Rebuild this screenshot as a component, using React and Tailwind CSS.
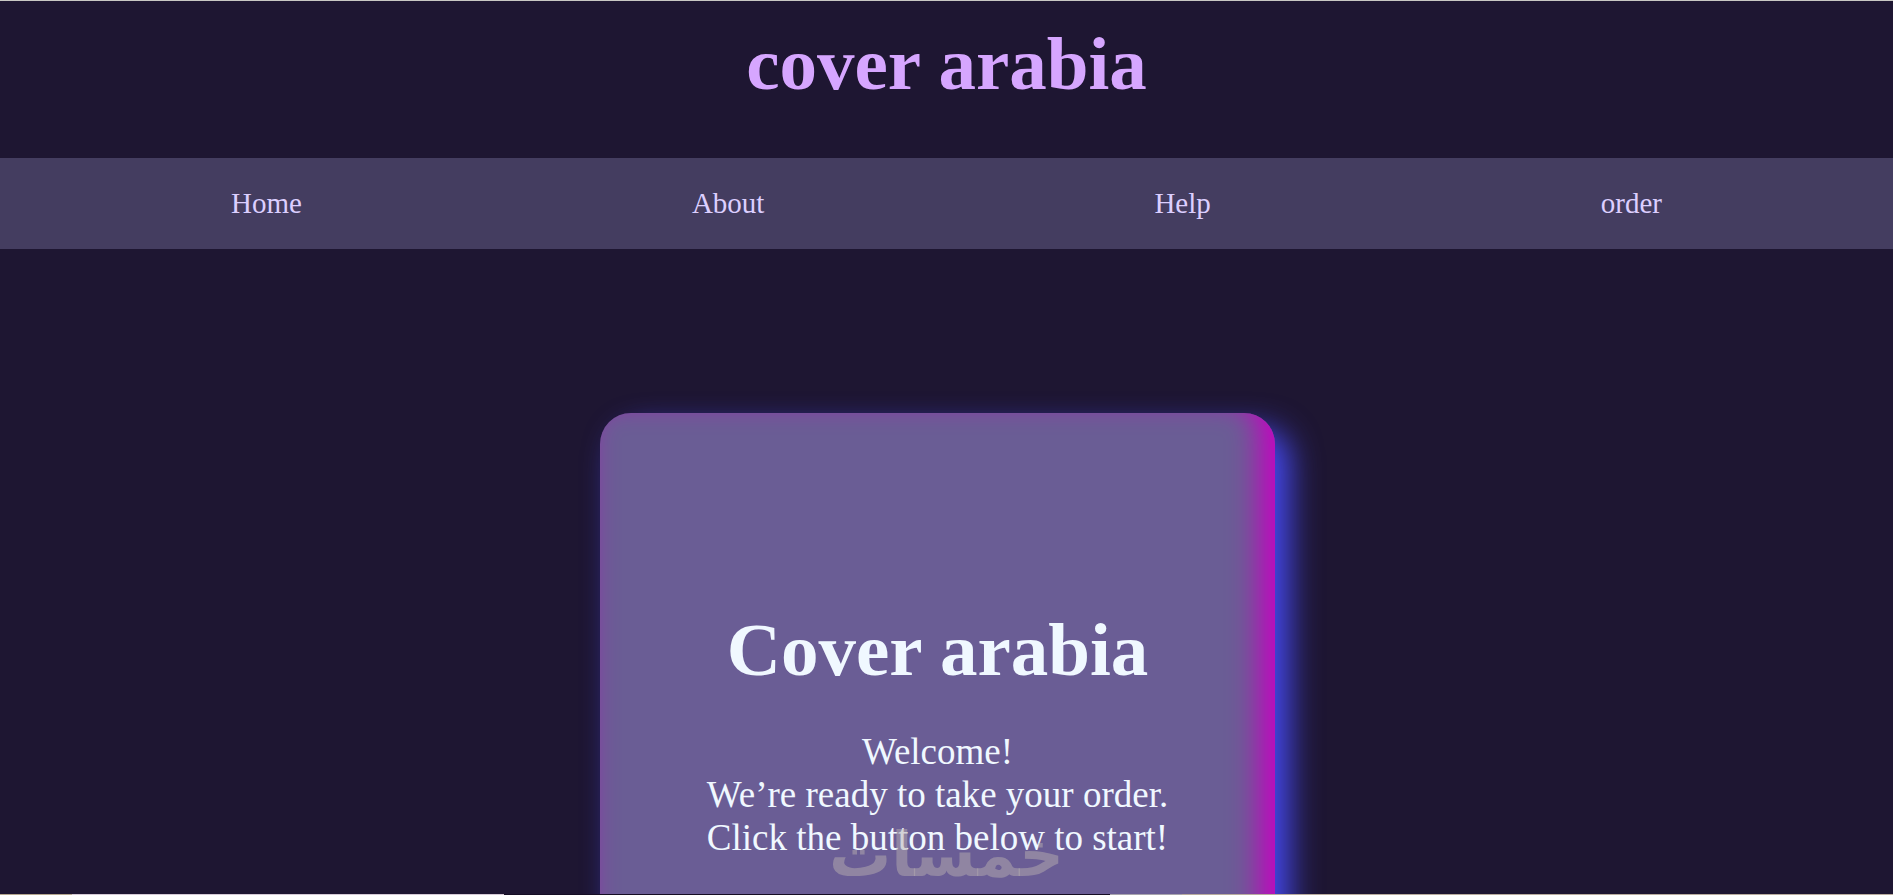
const links = [
  { name: "Home", href: "#home" },
  { name: "About", href: "#about" },
  { name: "Help", href: "#help" },
  { name: "order", href: "#order" },
];

function Navbar() {
  return (
    <nav className="bg-[#443d60]">
      <ul className="flex justify-around px-9 py-7">
        {links.map((link) => (
          <li key={link.name}>
            <a
              href={link.href}
              className="block text-[29px] leading-[35px] text-[#dccfff] hover:text-white"
            >
              {link.name}
            </a>
          </li>
        ))}
      </ul>
    </nav>
  );
}

function WelcomeCard() {
  return (
    <section className="w-[675px] max-w-full shrink-0 rounded-[31px] bg-[#6a5d95] pt-[194px] pb-32 text-center text-[#f0f8ff] shadow-[15px_15px_31px_#4549ed,inset_-15px_-15px_31px_#c700c2]">
      <h2 className="text-[75px] leading-[86px] font-bold">Cover arabia</h2>
      <p className="mt-[37px] text-[37px] leading-[43px]">
        Welcome!
        <br />
        We’re ready to take your order.
        <br />
        Click the button below to start!
      </p>
    </section>
  );
}

export default function App() {
  return (
    <div className="relative flex h-screen flex-col overflow-hidden border-t border-[#c9c8c4] bg-[#1e1632] font-['Liberation_Serif',serif]">
      <header className="shrink-0">
        <h1 className="pt-5 pb-[51px] text-center text-[75px] leading-[86px] font-bold text-[#d6a6ff]">
          cover arabia
        </h1>
        <Navbar />
      </header>

      <main className="flex min-h-0 flex-1 items-start justify-center overflow-hidden pt-41 pr-[18px]">
        <WelcomeCard />
      </main>

      {/* Thin strip along the bottom edge */}
      <div className="flex h-px shrink-0">
        <div className="w-18 bg-[#b5a68f]" />
        <div className="w-108 bg-[#d5cad6]" />
        <div className="w-[32%] bg-[#150d24]" />
        <div className="w-18 bg-[#a8a4ae]" />
        <div className="flex-1 bg-[#b9ac9f]" />
      </div>

      {/* Watermark */}
      <span
        lang="ar"
        dir="rtl"
        className="pointer-events-none absolute bottom-1 left-1/2 -translate-x-1/2 font-['DejaVu_Sans',sans-serif] text-[62px] leading-[72px] font-bold text-[#b5adb0]/50"
      >
        خمسات
      </span>
    </div>
  );
}
